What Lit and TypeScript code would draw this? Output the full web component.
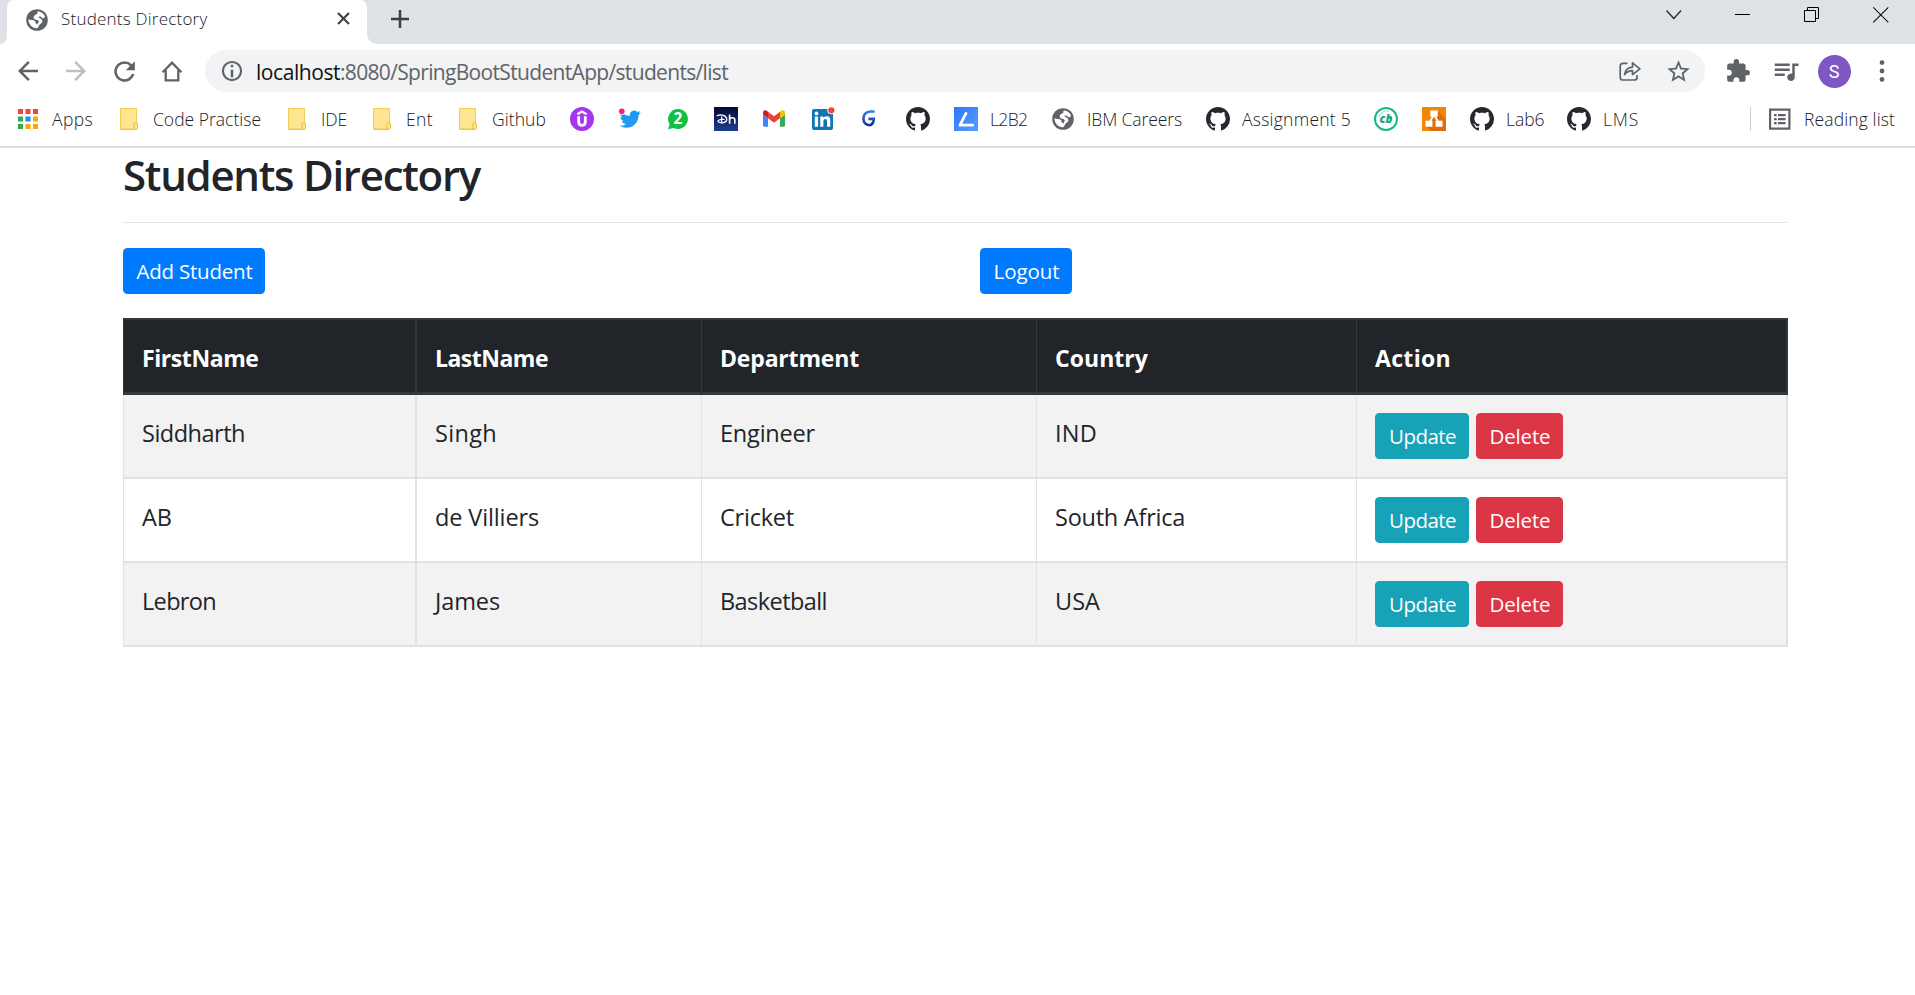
import { LitElement, html, svg, css, TemplateResult } from "lit";
import { customElement, property } from "lit/decorators.js";

/** A single line of text whose tracking is adjusted to fill a given advance width. */
@customElement("fit-text")
class FitText extends LitElement {
  @property() text = "";
  @property({ type: Number }) width = 0;

  static styles = css`
    :host { display: inline-block; white-space: pre; flex: none; }
  `;

  render() {
    return html`<span>${this.text}</span>`;
  }

  updated() {
    const span = this.renderRoot.querySelector("span") as HTMLElement;
    span.style.letterSpacing = "0px";
    const natural = span.getBoundingClientRect().width;
    const spacing = (this.width - natural) / this.text.length;
    span.style.letterSpacing = `${spacing.toFixed(3)}px`;
  }
}

const fit = (text: string, width: number) =>
  html`<fit-text .text=${text} .width=${width}></fit-text>`;

const draw = (w: number, h: number, box: string, body: unknown): TemplateResult =>
  html`<svg class="icon" width=${w} height=${h} viewBox=${box}>${body}</svg>`;

const GREY = "#5f6368";

const icons = {
  globe: draw(22, 22, "0 0 22 22", svg`
    <circle cx="11" cy="11" r="10.8" fill=${GREY}/>
    <path fill="#fff" d="M2.300 10.600 7.600 11.200Q9.800 11.800 9.600 14L11.300 15.600 10.800 19.600Q3.200 18.500 2.300 10.600z"/>
    <path fill="#fff" d="M11.500 2.400Q16.600 2.600 19 7.200L18 9.300Q16 9.600 15 7.800L12.600 7.600Q12.200 9.300 14.600 9.600 16.600 10.400 16.400 13.200L13.600 15.400 11.600 19.200 10.600 18 11.600 14.800Q13.800 12.600 11.800 11.200L8.400 10.200Q6.600 8.200 8.400 6.400L11.300 4.800z"/>`),
  apps: draw(20, 20, "0 0 20 20", svg`
    <path fill="#f44336" d="M0 0h5v5H0zM7.5 0h5v5h-5zM15 0h5v5h-5z"/>
    <path fill="#34a853" d="M0 7.5h5v5H0zM0 15h5v5H0z"/>
    <path fill="#1e88f5" d="M7.5 7.5h5v5h-5z"/>
    <path fill="#fba800" d="M15 7.5h5v5h-5zM7.5 15h5v5h-5zM15 15h5v5h-5z"/>`),
  folder: draw(18, 22, "0 0 18 22", svg`
    <path fill="#ffe58f" stroke="#f3cf58" d="M.5 .5H16.5V21H.5z"/>
    <path fill="#ffe58f" stroke="#e9bd3c" d="M14 21.4v-5.6q0-1.3 1.7-1.3t1.8 1.3v3.6q0 2-2 2H.5"/>`),
  udemy: draw(24, 24, "0 0 24 24", svg`
    <circle cx="12" cy="12" r="12" fill="#a435f0"/>
    <path fill="none" stroke="#fff" stroke-width="2.200" d="M7.4 7.2 12 4.6l4.6 2.6"/>
    <path fill="none" stroke="#fff" stroke-width="2.800" d="M8.700 9.200v5.800q0 3.400 3.300 3.400t3.300-3.400V9.200"/>`),
  twitter: draw(22, 22, "0 0 22 22", svg`
    <path fill="#1d9bf0" transform="translate(0.6 .6) scale(.88)" d="M23.95 4.57a10 10 0 0 1-2.82.77 4.96 4.96 0 0 0 2.16-2.72c-.95.55-2 .95-3.13 1.18a4.92 4.92 0 0 0-8.38 4.48C7.69 8.1 4.07 6.13 1.64 3.16a4.92 4.92 0 0 0 1.52 6.57 4.9 4.9 0 0 1-2.23-.61v.06c0 2.38 1.7 4.37 3.95 4.82a5 5 0 0 1-2.21.08 4.94 4.94 0 0 0 4.6 3.42A9.87 9.87 0 0 1 0 19.54a13.99 13.99 0 0 0 7.55 2.21c9.05 0 14-7.5 14-13.98 0-.21 0-.42-.02-.63a9.94 9.94 0 0 0 2.46-2.55z"/>
    <circle cx="2.8" cy="3.2" r="3.6" fill="#fff"/>
    <circle cx="2.8" cy="3.2" r="2.8" fill="#f91880"/>`),
  whatsapp: draw(22, 22, "0 0 22 22", svg`
    <path fill="#0dc143" d="M11 1a10 10 0 1 1-4.6 18.9L1 21.2l1.6-5A10 10 0 0 1 11 1z"/>
    <text x="11" y="16.4" text-anchor="middle" font-family="Open Sans" font-weight="700" font-size="15.500" fill="#fff">2</text>`),
  hotstar: draw(24, 24, "0 0 24 24", svg`
    <defs><linearGradient id="dh" x2="0" y2="1"><stop offset="0" stop-color="#04082e"/><stop offset="1" stop-color="#1c3f94"/></linearGradient></defs>
    <path fill="url(#dh)" d="M0 0h24v24H0z"/>
    <path fill="none" stroke="#fff" stroke-width="1.200" stroke-linecap="round" d="M3.2 8.6C8 6.8 13 9 12.8 12.6 12.6 16 6.6 16.6 4.2 14.8 3 13.600 6 12 10 12.400M7.600 9.800v6"/>
    <path fill="none" stroke="#fff" stroke-width="1.600" d="M15.6 7.600v9.200M15.6 12.800q0-2 2.600-2t2.600 2v4"/>`),
  gmail: draw(22, 17, "52 42 88 66", svg`
    <path fill="#4285f4" d="M58 108h14V74L52 59v43c0 3.320 2.690 6 6 6"/>
    <path fill="#34a853" d="M120 108h14c3.320 0 6-2.690 6-6V59l-20 15"/>
    <path fill="#fbbc04" d="M120 48v26l20-15v-8c0-7.420-8.470-11.650-14.400-7.200"/>
    <path fill="#ea4335" d="M72 74V48l24 18 24-18v26L96 92"/>
    <path fill="#c5221f" d="M52 51v8l20 15V48l-5.600-4.200c-5.940-4.450-14.400-.22-14.400 7.200"/>`),
  linkedin: draw(24, 24, "0 0 24 24", svg`
    <rect x="1" y="2" width="21" height="21" rx="2" fill="#0e76b4"/>
    <path fill="#fff" d="M3.800 9.600h3.300v10.200H3.800zM9.200 9.600h3.100v1.500c.6-1.100 1.800-1.800 3.300-1.800 3 0 3.700 2 3.700 4.700v5.800H16v-5.200c0-1.400-.2-2.500-1.700-2.500s-1.900 1.100-1.900 2.500v5.200H9.200z"/>
    <circle cx="5.450" cy="6.400" r="1.900" fill="#fff"/>
    <circle cx="20.300" cy="3.300" r="4" fill="#fff"/><circle cx="20.300" cy="3.300" r="3.100" fill="#f44336"/>`),
  gee: draw(14, 17, "0 0 14 17", svg`
    <defs><linearGradient id="gg" x2="0" y2="1"><stop offset="0" stop-color="#2f80ed"/><stop offset=".5" stop-color="#2457c5"/><stop offset="1" stop-color="#14349c"/></linearGradient></defs>
    <path fill="none" stroke="url(#gg)" stroke-width="2.600" d="M12.600 1.500H8.500Q1.500 2 1.400 8.700 1.700 14.600 7.600 15.200 11.600 14.400 11.800 8.900H6.400"/>`),
  github: draw(24, 24, "0 0 16 16", svg`
    <path fill="#24292f" fill-rule="evenodd" d="M8 0C3.580 0 0 3.580 0 8c0 3.540 2.290 6.530 5.470 7.590.4.070.55-.17.55-.38 0-.19-.01-.82-.01-1.490-2.010.37-2.530-.49-2.690-.94-.09-.23-.48-.94-.82-1.130-.28-.15-.68-.52-.01-.53.63-.01 1.080.58 1.230.82.72 1.210 1.870.87 2.330.66.07-.52.28-.87.51-1.070-1.780-.2-3.640-.89-3.640-3.950 0-.87.31-1.590.82-2.150-.08-.2-.36-1.020.08-2.120 0 0 .67-.21 2.200.82.64-.18 1.320-.27 2-.27s1.360.09 2 .27c1.530-1.040 2.200-.82 2.200-.82.44 1.100.16 1.920.08 2.120.51.56.82 1.270.82 2.150 0 3.070-1.870 3.750-3.650 3.950.29.25.54.73.54 1.480 0 1.070-.01 1.930-.01 2.200 0 .21.15.46.55.38A8.010 8.010 0 0 0 16 8c0-4.420-3.580-8-8-8z"/>`),
  l2b2: draw(24, 24, "0 0 24 24", svg`
    <defs><linearGradient id="lb" x2="1" y2="1"><stop offset="0" stop-color="#2979f8"/><stop offset="1" stop-color="#5a9bff"/></linearGradient></defs>
    <path fill="url(#lb)" d="M0 0h24v24H0z"/>
    <path fill="none" stroke="#fff" stroke-width="2.800" stroke-linejoin="round" stroke-linecap="round" d="M12 6.400 6 18.200h12.600"/>`),
  careerbuilder: draw(24, 24, "0 0 24 24", svg`
    <circle cx="12" cy="12" r="11" fill="#fff" stroke="#17b787" stroke-width="2"/>
    <path d="M5 10A8 8 0 0 1 15 4.300" fill="none" stroke="#a9e4d1" stroke-width="1.200"/>
    <text x="12" y="16" text-anchor="middle" font-family="Open Sans" font-weight="800" font-style="italic" font-size="11.500" fill="#17a67c">cb</text>`),
  drawio: draw(24, 24, "0 0 24 24", svg`
    <path fill="#f08705" d="M0 0h24v24H0z"/>
    <path fill="#df6c0c" d="M16 4.500 24 12.500V24H9.500L4 19.500z"/>
    <path fill="none" stroke="#fff" stroke-width="1.800" d="M12 8 7 16M12 8l5 8"/>
    <path fill="#fff" d="M8.300 3.500h7.400v6.300H8.300zM3.500 13.800h7v6h-7zM13.500 13.800h7v6h-7z"/>`),
  reading: draw(22, 22, "0 0 22 22", svg`
    <path fill="none" stroke=${GREY} stroke-width="2.200" d="M1.100 1.600h19.300v19H1.100z"/>
    <path fill=${GREY} d="M5 6h2.600v2.200H5zM9 6h7.600v2.200H9zM5 10h2.600v2.200H5zM9 10h7.600v2.200H9zM5 14h2.600v2.200H5zM9 14h7.600v2.200H9z"/>`),
  back: draw(30, 30, "0 0 24 24", svg`<path fill=${GREY} d="M20 11H7.830l5.590-5.590L12 4l-8 8 8 8 1.410-1.410L7.830 13H20z"/>`),
  forward: draw(30, 30, "0 0 24 24", svg`<path fill="#bdbfc1" d="m12 4-1.410 1.410L16.170 11H4v2h12.170l-5.580 5.590L12 20l8-8z"/>`),
  reload: draw(31, 31, "0 0 24 24", svg`<path fill=${GREY} d="M17.650 6.350A7.960 7.960 0 0 0 12 4a8 8 0 1 0 7.730 10h-2.080A6 6 0 1 1 12 6c1.660 0 3.140.69 4.220 1.780L13 11h7V4z"/>`),
  home: draw(22, 22, "0 0 22 22", svg`<path fill="none" stroke=${GREY} stroke-width="2.300" d="M1.600 12.300 11 2.700l9.400 9.600M4.700 9.500v10.800h12.600V9.500"/>`),
  info: draw(30, 30, "0 0 24 24", svg`
    <path fill=${GREY} d="M11 7h2v2h-2zm0 4h2v6h-2zm1-7.100a8.100 8.100 0 1 0 0 16.200 8.100 8.100 0 0 0 0-16.200zm0 14.500a6.400 6.400 0 1 1 0-12.800 6.400 6.400 0 0 1 0 12.800z"/>`),
  share: draw(22, 22, "0 0 22 22", svg`
    <path fill="none" stroke=${GREY} stroke-width="1.700" stroke-linejoin="round" d="M8.500 3.400H4Q1.200 3.400 1.200 6v11.200Q1.200 20 4 20h11.400q2.600 0 2.600-2.600V15M5.600 14.600C6.400 9.600 9 7.300 13.500 7.100V2.800l7.400 6-7.400 5.800v-4C10 10.700 7.700 11.700 5.600 14.600z"/>`),
  star: draw(27, 27, "0 0 24 24", svg`
    <path fill=${GREY} d="m22 9.240-7.190-.62L12 2 9.190 8.630 2 9.240l5.460 4.730L5.820 21 12 17.270 18.180 21l-1.630-7.030zM12 15.400l-3.760 2.270 1-4.280-3.320-2.880 4.380-.38L12 6.100l1.710 4.040 4.380.38-3.320 2.880 1 4.280z"/>`),
  puzzle: draw(26, 26, "0 0 24 24", svg`
    <path fill=${GREY} d="M20.500 11H19V7c0-1.100-.9-2-2-2h-4V3.500a2.500 2.500 0 0 0-5 0V5H4c-1.100 0-1.990.9-1.990 2v3.800H3.500a2.700 2.700 0 0 1 0 5.400H2V20c0 1.100.9 2 2 2h3.800v-1.500a2.700 2.700 0 0 1 5.400 0V22H17c1.100 0 2-.9 2-2v-4h1.500a2.500 2.500 0 0 0 0-5z"/>`),
  queue: draw(30, 30, "0 0 24 24", svg`
    <path fill=${GREY} d="M15 6H3v2h12zm0 4H3v2h12zM3 16h8v-2H3zM17 6v8.180A3 3 0 1 0 19 17V8h3V6z"/>`),
  dots: draw(6, 22, "0 0 6 22", svg`<g fill=${GREY}><circle cx="3" cy="2.600" r="2.400"/><circle cx="3" cy="11" r="2.400"/><circle cx="3" cy="19.400" r="2.400"/></g>`),
  tabClose: draw(13, 13, "0 0 13 13", svg`<path stroke="#3c4043" stroke-width="2.100" d="m1 1 11 11M12 1 1 12"/>`),
  plus: draw(18, 18, "0 0 18 18", svg`<path stroke="#3c4043" stroke-width="2.500" d="M9 0v18M0 9h18"/>`),
  chevron: draw(16, 16, "0 0 16 16", svg`<path fill="none" stroke="#222" stroke-width="1.200" d="m.5 3.500 7.300 8 7.300-8"/>`),
  minimise: draw(16, 16, "0 0 16 16", svg`<path fill="#000" d="M0 7h15v1H0z"/>`),
  restore: draw(16, 16, "0 0 16 16", svg`<path fill="none" stroke="#000" d="M.5 3.500h11v11H.5zM3.500 3.500v-3h11v11h-3"/>`),
  close: draw(16, 16, "0 0 16 16", svg`<path stroke="#111" stroke-width="1.100" d="m.3.300 15 15M15.300.300l-15 15"/>`),
};

interface Bookmark { icon: TemplateResult; slot: number; iconBox: number; label?: string; width?: number; }

/* slot: distance to the next bookmark; iconBox: distance from icon start to label start. */
const bookmarks: Bookmark[] = [
  { icon: icons.apps, slot: 102, iconBox: 34, label: "Apps", width: 41 },
  { icon: icons.folder, slot: 168, iconBox: 33, label: "Code Practise", width: 108 },
  { icon: icons.folder, slot: 85, iconBox: 33, label: "IDE", width: 26 },
  { icon: icons.folder, slot: 86, iconBox: 33, label: "Ent", width: 27 },
  { icon: icons.folder, slot: 111, iconBox: 33, label: "Github", width: 54 },
  { icon: icons.udemy, slot: 49, iconBox: 24 },
  { icon: icons.twitter, slot: 48, iconBox: 24 },
  { icon: icons.whatsapp, slot: 47, iconBox: 24 },
  { icon: icons.hotstar, slot: 49, iconBox: 24 },
  { icon: icons.gmail, slot: 48, iconBox: 24 },
  { icon: icons.linkedin, slot: 51, iconBox: 24 },
  { icon: icons.gee, slot: 44, iconBox: 14 },
  { icon: icons.github, slot: 48, iconBox: 24 },
  { icon: icons.l2b2, slot: 98, iconBox: 36, label: "L2B2", width: 37.500 },
  { icon: icons.globe, slot: 154, iconBox: 35, label: "IBM Careers", width: 95 },
  { icon: icons.github, slot: 168, iconBox: 36, label: "Assignment 5", width: 109 },
  { icon: icons.careerbuilder, slot: 48, iconBox: 24 },
  { icon: icons.drawio, slot: 48, iconBox: 24 },
  { icon: icons.github, slot: 97, iconBox: 36, label: "Lab6", width: 38.500 },
  { icon: icons.github, slot: 97, iconBox: 36, label: "LMS", width: 36 },
];

const headers: [string, number][] = [
  ["FirstName", 116.500], ["LastName", 113], ["Department", 139], ["Country", 93], ["Action", 76],
];

const students: [string, number][][] = [
  [["Siddharth", 103], ["Singh", 62], ["Engineer", 95], ["IND", 42]],
  [["AB", 30], ["de Villiers", 104], ["Cricket", 74], ["South Africa", 130]],
  [["Lebron", 74], ["James", 65], ["Basketball", 107], ["USA", 45]],
];

@customElement("app-root")
class AppRoot extends LitElement {
  static styles = css`
    :host { display: block; height: 995px; background: #fff; overflow: hidden;
      font-family: "Open Sans", "Noto Sans", sans-serif; color: #212529; }
    * { box-sizing: border-box; }
    .icon { display: block; flex: none; overflow: visible; }

    .strip { display: flex; height: 44px; background: #dee1e6; align-items: flex-start; }
    .edge { width: 7px; height: 44px; background: #fff; }
    .edge-fill { width: 7px; height: 44px; background: #dee1e6; border-bottom-right-radius: 7px; }
    .tab { display: flex; width: 360px; height: 44px; background: #fff; padding: 0 17px 5px 19px; align-items: center;
      border-radius: 7px 7px 0 0; font-size: 17px; font-weight: 300; color: #202124; }
    .tab-title { margin-left: 13px; line-height: 24px; margin-top: -1px; }
    .tab-close { margin-left: auto; margin-top: -2px; }
    .rest { display: flex; flex: 1; height: 44px; align-items: flex-start; }
    .curve { width: 10px; height: 44px; background: linear-gradient(#dee1e6 0 30px, #fff 30px); }
    .curve-fill { width: 10px; height: 44px; background: #dee1e6; border-bottom-left-radius: 10px; }
    .new-tab { margin: 10px 0 0 14px; }
    .window { display: flex; margin: 7px 26px 0 auto; gap: 53px; }

    .toolbar { display: flex; height: 54px; align-items: center; padding-left: 4px; }
    .button { display: flex; width: 48px; height: 48px; align-items: center; justify-content: center; flex: none; }
    .omnibox { display: flex; width: 1500px; height: 42px; margin: 0 9px; border-radius: 21px; background: #f1f3f4;
      align-items: center; padding: 0 3px 0 12px; font-size: 21px; color: #5f6368; }
    .url { display: flex; margin-left: 9px; line-height: 28px; padding-top: 1px; }
    .host { color: #111; }
    .actions { display: flex; margin-left: auto; }
    .avatar { display: flex; width: 33px; height: 33px; border-radius: 50%; background: #7e57c2; color: #fff;
      align-items: center; justify-content: center; font-family: Roboto, sans-serif; font-size: 18px; }

    .bookmarks { display: flex; height: 50px; padding: 0 20px 7px 18px; align-items: center; border-bottom: 2px solid #dadce0;
      font-size: 17.500px; font-weight: 300; color: #202124; line-height: 24px; }
    .bookmark { display: flex; align-items: center; flex: none; }
    .bookmark-icon { display: flex; flex: none; }
    .reading { display: flex; align-items: center; margin-left: auto; height: 24px; border-left: 1px solid #cfd1d4; padding-left: 18px; gap: 13px; }

    .page { display: flex; flex-direction: column; width: 1665px; margin-left: 123px; }
    .title { margin: 0; height: 74px; line-height: 54px; font-size: 42px; font-weight: 600; }
    .rule { height: 1px; background: #e3e4e5; }
    .controls { display: flex; justify-content: space-between; width: 949px; margin: 25px 0 24px; }
    .btn { display: flex; height: 46px; align-items: center; justify-content: center; border-radius: 4.500px; color: #fff;
      font-size: 20.500px; line-height: 28px; padding-left: 1px; background: #007bff; }
    .add { width: 142px; }
    .logout { width: 92px; }
    .update { width: 94px; background: #17a2b8; }
    .delete { width: 87px; background: #dc3545; }

    .row { display: grid; grid-template-columns: 294px 285px 335px 320px 431px; height: 84px; }
    .row:nth-child(even) { background: #f2f2f2; }
    .cell { border: solid #dee2e6; border-width: 0 1px 2px 0; padding: 20px 0 0 18px; font-size: 23.500px; line-height: 36px; }
    .cell:first-child { border-left-width: 1px; border-right-width: 2px; }
    .cell:last-child { border-right-width: 2px; display: flex; gap: 7px; padding-top: 18px; }
    .row.head { height: 77px; background: #212529; color: #fff; font-weight: 700; }
    .row.head .cell { border-color: #32383e; border-top-width: 2px; border-bottom-width: 3px; padding-top: 20px; font-size: 23px; }
  `;

  render() {
    return html`
      <div class="strip">
        <div class="edge"><div class="edge-fill"></div></div>
        <div class="tab">${icons.globe}<span class="tab-title">${fit("Students Directory", 146.5)}</span>
          <span class="tab-close">${icons.tabClose}</span></div>
        <div class="rest">
          <div class="curve"><div class="curve-fill"></div></div>
          <span class="new-tab">${icons.plus}</span>
          <div class="window">${icons.chevron}${icons.minimise}${icons.restore}${icons.close}</div>
        </div>
      </div>
      <div class="toolbar">
        ${[icons.back, icons.forward, icons.reload, icons.home].map((i) => html`<span class="button">${i}</span>`)}
        <div class="omnibox">
          ${icons.info}
          <span class="url"><span class="host">${fit("localhost", 84)}</span>${fit(":8080/SpringBootStudentApp/students/list", 388)}</span>
          <span class="actions"><span class="button">${icons.share}</span><span class="button">${icons.star}</span></span>
        </div>
        <span class="button">${icons.puzzle}</span>
        <span class="button">${icons.queue}</span>
        <span class="button"><span class="avatar">S</span></span>
        <span class="button">${icons.dots}</span>
      </div>
      <div class="bookmarks">
        ${bookmarks.map((b) => html`
          <span class="bookmark" style="width:${b.slot}px">
            <span class="bookmark-icon" style="width:${b.iconBox}px">${b.icon}</span>
            ${b.label ? fit(b.label, b.width!) : ""}
          </span>`)}
        <span class="reading">${icons.reading}${fit("Reading list", 91)}</span>
      </div>
      <main class="page">
        <h1 class="title">${fit("Students Directory", 357)}</h1>
        <div class="rule"></div>
        <div class="controls">
          <span class="btn add">${fit("Add Student", 116)}</span>
          <span class="btn logout">${fit("Logout", 66)}</span>
        </div>
        <div class="table">
          <div class="row head">${headers.map(([t, w]) => html`<div class="cell">${fit(t, w)}</div>`)}</div>
          ${students.map((s) => html`
            <div class="row">
              ${s.map(([t, w]) => html`<div class="cell">${fit(t, w)}</div>`)}
              <div class="cell">
                <span class="btn update">${fit("Update", 67)}</span>
                <span class="btn delete">${fit("Delete", 61)}</span>
              </div>
            </div>`)}
        </div>
      </main>
    `;
  }
}
